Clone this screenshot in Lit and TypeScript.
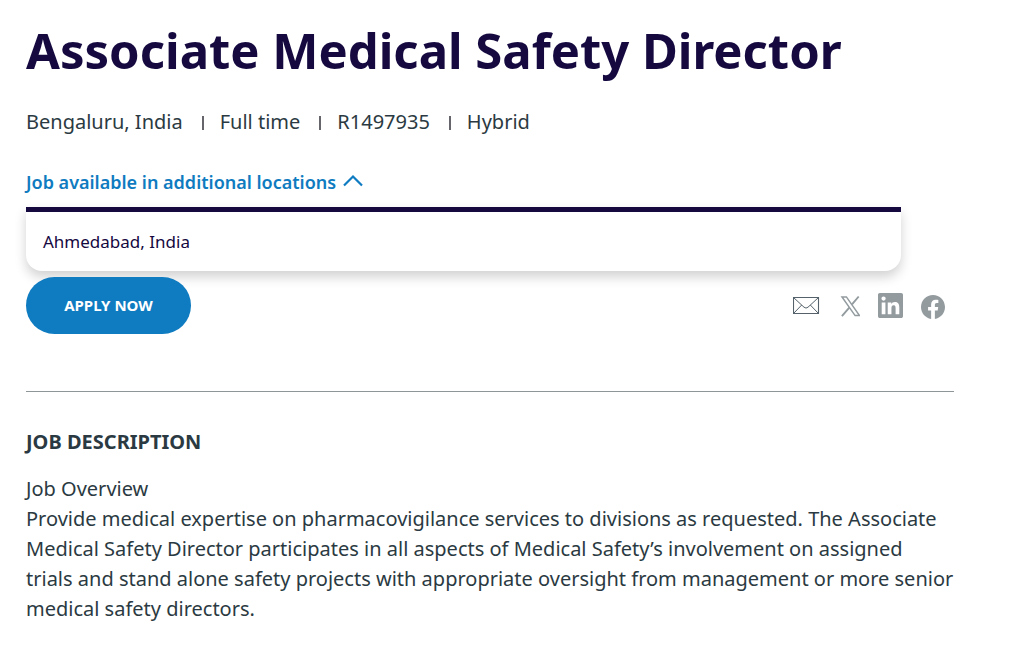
import { LitElement, html, css, svg } from "lit";
import { customElement, state } from "lit/decorators.js";

@customElement("app-root")
export class AppRoot extends LitElement {
  @state() private open = true;

  private facts = ["Bengaluru, India", "Full time", "R1497935", "Hybrid"];

  static styles = css`
    :host {
      display: block;
      min-height: 100vh;
      background: #fff;
      color: #2b3a42;
      font-family: "Noto Sans", "Open Sans", sans-serif;
      font-size: 20px;
      line-height: 30px;
    }
    * { box-sizing: border-box; }
    main { padding: 19px 55px 24px 26px; }
    h1 {
      margin: 0;
      color: #15093f;
      font-size: 49px;
      line-height: 62px;
      font-weight: 700;
    }
    .facts {
      display: flex;
      flex-wrap: wrap;
      list-style: none;
      margin: 26px 0 0;
      padding: 0;
    }
    .facts li { display: flex; align-items: center; }
    .facts li + li::before {
      content: "";
      width: 2px;
      height: 14px;
      margin: 2px 16px 0 19px;
      background: #66656c;
    }
    .toggle {
      display: flex;
      align-items: center;
      gap: 6px;
      margin-top: 30px;
      padding: 0;
      border: 0;
      background: none;
      color: #0f7bc0;
      font: 600 18px/30px "Noto Sans", sans-serif;
      cursor: pointer;
    }
    .places {
      list-style: none;
      width: 94.3%;
      margin: 10px 0 0;
      padding: 15px 17px 14px;
      border-top: 5px solid #15093f;
      border-radius: 0 0 16px 16px;
      box-shadow: 0 6px 12px rgba(0, 0, 0, 0.18);
      color: #15093f;
      font-size: 17px;
    }
    .actions {
      display: flex;
      align-items: center;
      justify-content: space-between;
      margin-top: 6px;
      padding-right: 9px;
    }
    .apply {
      width: 165px;
      height: 57px;
      padding: 0 0 2px;
      border: 0;
      border-radius: 29px;
      background: #0f7bc0;
      color: #fff;
      font: 700 15px/30px "Noto Sans", sans-serif;
      cursor: pointer;
    }
    .share { display: flex; align-items: center; gap: 18px; }
    .share a { display: flex; color: #939b9f; }
    svg { display: block; }
    hr {
      height: 1px;
      margin: 57px 0 35px;
      border: 0;
      background: #8e9698;
    }
    h2 { margin: 0; font-size: 20px; line-height: 30px; font-weight: 700; }
    p { margin: 0; }
    .body { margin-top: 17px; }
  `;

  private icons = [
    { name: "Email", art: svg`<svg width="27" height="18" viewBox="0 0 27 18" fill="none" stroke="#55626b"><path d="M.5.5h25v16H.5z" stroke-width="1.100"/><path d="M.5.5 11 10.200q2 1.800 4 0L25.500.5M.5 16.500l8.200-8.500M25.500 16.500l-8.200-8.500"/></svg>` },
    { name: "X", art: svg`<svg width="22" height="22" viewBox="-3 -1 22 22" fill="none" stroke="currentColor"><path d="M1 .9h4.400l13.100 18.700h-4.400z" stroke-width="1.500"/><path d="M17.700.5 11 8.300M8.300 11.600.9 20.100" stroke-width="1.900"/></svg>` },
    { name: "LinkedIn", art: svg`<svg width="25" height="25" viewBox="0 0 24 24" fill="currentColor"><path d="M20.450 20.450h-3.560v-5.570c0-1.330-.02-3.040-1.850-3.040-1.850 0-2.140 1.450-2.140 2.940v5.670H9.350V9h3.410v1.560h.05c.48-.9 1.640-1.850 3.370-1.850 3.600 0 4.270 2.370 4.270 5.460zM5.340 7.430a2.060 2.060 0 1 1 0-4.130 2.060 2.060 0 0 1 0 4.130zM7.120 20.450H3.550V9h3.570zM22.220 0H1.770C.79 0 0 .77 0 1.730v20.540C0 23.230.79 24 1.770 24h20.450c.98 0 1.780-.77 1.780-1.730V1.730C24 .77 23.200 0 22.220 0z"/></svg>` },
    { name: "Facebook", art: svg`<svg width="24" height="26" viewBox="0 -2 24 26" fill="currentColor"><path d="M24 12.070C24 5.410 18.630 0 12 0S0 5.400 0 12.070C0 18.100 4.390 23.100 10.130 24v-8.440H7.080v-3.490h3.040V9.410c0-3.020 1.800-4.700 4.540-4.700 1.310 0 2.680.24 2.680.24v2.970h-1.500c-1.500 0-1.960.93-1.960 1.890v2.260h3.320l-.53 3.500h-2.800V24C19.610 23.100 24 18.100 24 12.070"/></svg>` },
  ];

  render() {
    return html`
      <main>
        <h1>Associate Medical Safety Director</h1>
        <ul class="facts">${this.facts.map((f) => html`<li>${f}</li>`)}</ul>
        <button class="toggle" aria-expanded=${this.open} @click=${() => (this.open = !this.open)}>
          Job available in additional locations
          <svg width="22" height="16" viewBox="0 0 22 16" fill="none" stroke="currentColor" stroke-width="2.200"><path d=${this.open ? "M2 11.500 11 2.500l9 9" : "M2 3l9 9 9-9"} /></svg>
        </button>
        ${this.open ? html`<ul class="places"><li>Ahmedabad, India</li></ul>` : ""}
        <div class="actions">
          <button class="apply">APPLY NOW</button>
          <nav class="share" aria-label="Share">
            ${this.icons.map((i) => html`<a href="#" aria-label=${i.name}>${i.art}</a>`)}
          </nav>
        </div>
        <hr />
        <h2>JOB DESCRIPTION</h2>
        <div class="body">
          <p>Job Overview</p>
          <p>Provide medical expertise on pharmacovigilance services to divisions as requested. The Associate Medical Safety Director participates in all aspects of Medical Safety’s involvement on assigned trials and stand alone safety projects with appropriate oversight from management or more senior medical safety directors.</p>
        </div>
      </main>
    `;
  }
}
